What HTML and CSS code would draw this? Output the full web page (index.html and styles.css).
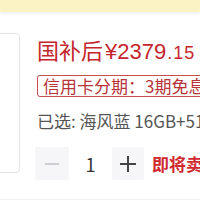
FILE: index.html
```html
<!DOCTYPE html>
<html lang="zh">
<head>
<meta charset="utf-8">
<link rel="stylesheet" href="styles.css">
</head>
<body>
<div class="topbar"></div>
<div class="product">
  <div class="thumb"></div>
  <div class="info">
    <div class="price"><span class="label">国补后</span><span class="amount">¥2379</span><span class="dec">.15</span></div>
    <div class="badge">信用卡分期：3期免息</div>
    <div class="selected">已选: 海风蓝 16GB+512GB</div>
    <div class="qty">
      <div class="btn minus"><svg width="16" height="16" viewBox="0 0 16 16"><path d="M1 8H15" stroke="#c4c4c8" stroke-width="1.6"/></svg></div>
      <div class="num">1</div>
      <div class="btn plus"><svg width="18" height="18" viewBox="0 0 18 18"><path d="M1 9H17M9 1V17" stroke="#444" stroke-width="2"/></svg></div>
      <div class="soon">即将卖完</div>
    </div>
  </div>
</div>
</body>
</html>
```
FILE: styles.css
```css
html, body {
  margin: 0;
  padding: 0;
  background: #fff;
  width: 200px;
  height: 200px;
  overflow: hidden;
  font-family: "Noto Sans CJK SC", "Noto Sans", sans-serif;
}
.topbar {
  height: 12px;
  background: #fcf3c4;
  box-shadow: 0 2px 3px rgba(0, 0, 0, 0.06);
}
.product {
  display: flex;
  gap: 17px;
  padding-top: 21px;
  padding-bottom: 19px;
  border-bottom: 1px solid #efefef;
  white-space: nowrap;
}
.thumb {
  flex: none;
  width: 80px;
  height: 140px;
  margin-left: -60px;
  border: 1px solid #e4e4e6;
  border-radius: 4px;
  box-sizing: border-box;
}
.info {
  display: flex;
  flex-direction: column;
}
.price {
  color: #c5262d;
  font-size: 22px;
  line-height: 28px;
  margin-top: 2px;
}
.price .amount {
  font-family: "Liberation Sans", "Noto Sans CJK SC", sans-serif;
  margin-left: 2px;
}
.price .dec {
  font-family: "Liberation Sans", "Noto Sans CJK SC", sans-serif;
  font-size: 18px;
  margin-left: 1px;
  letter-spacing: 1px;
}
.badge {
  align-self: flex-start;
  margin-top: 8px;
  padding: 0 5px;
  height: 20px;
  line-height: 20px;
  border: 1px solid #c94a50;
  border-radius: 3px;
  color: #b8333a;
  font-size: 17px;
}
.selected {
  margin-top: 13px;
  color: #555;
  font-size: 17px;
  line-height: 22px;
}
.qty {
  margin-top: 15px;
  display: flex;
  align-items: center;
}
.btn {
  width: 34px;
  height: 33px;
  background: #f6f6f8;
  display: flex;
  align-items: center;
  justify-content: center;
  border-radius: 2px;
}
.minus {
  margin-left: -2px;
}
.num {
  width: 43px;
  text-align: center;
  font-size: 18px;
  color: #333;
}
.plus {
  width: 32px;
}
.soon {
  margin-left: 8px;
  color: #d02a2f;
  font-weight: bold;
  font-size: 17px;
}
```
